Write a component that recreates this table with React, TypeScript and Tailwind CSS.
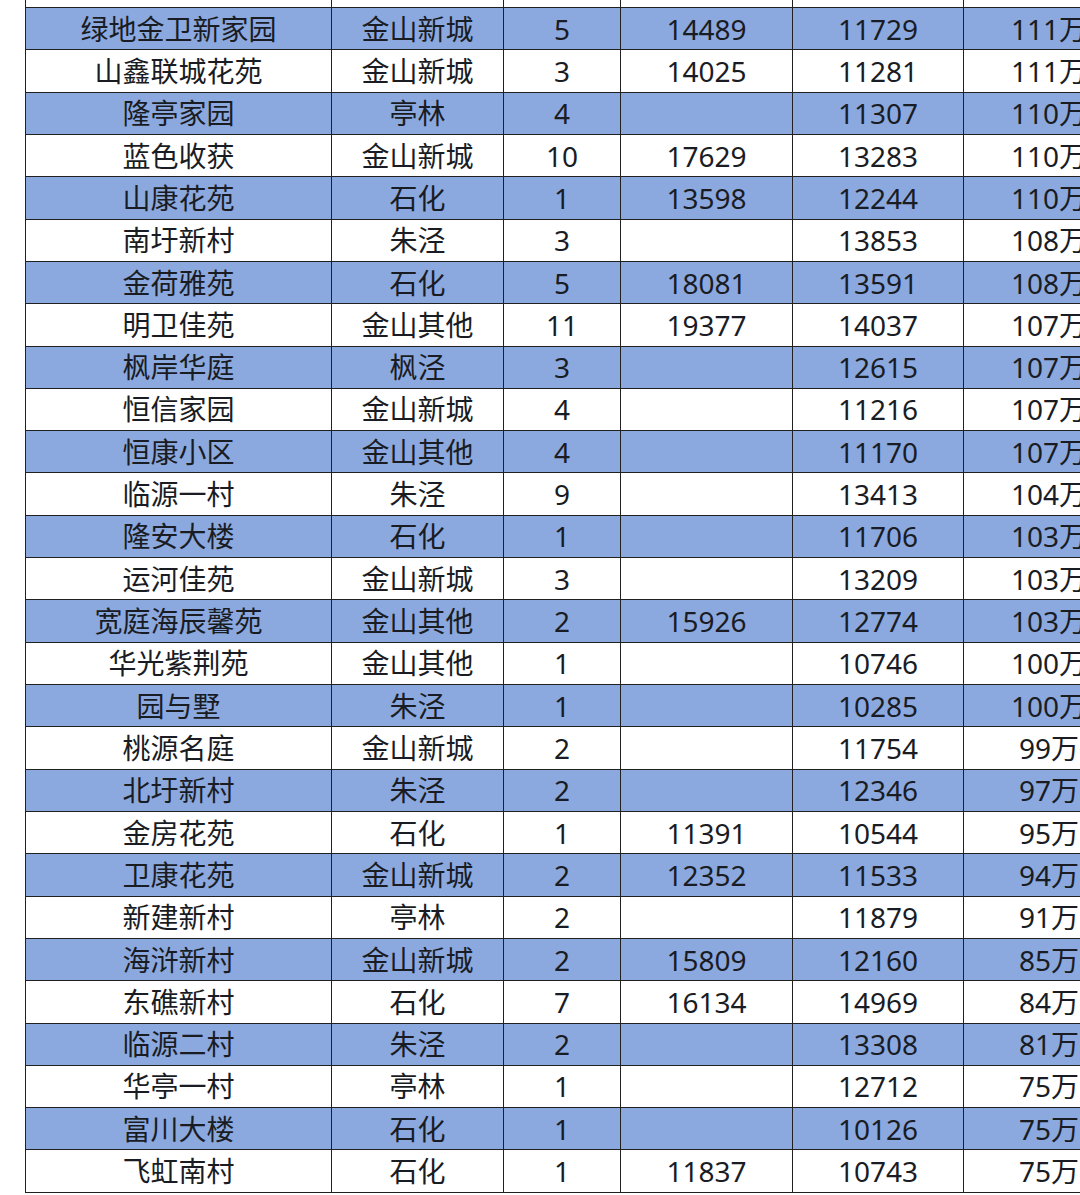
type Row = [string, string, string, string, string, string];

const rows: Row[] = [
  ["绿地金卫新家园", "金山新城", "5", "14489", "11729", "111万"],
  ["山鑫联城花苑", "金山新城", "3", "14025", "11281", "111万"],
  ["隆亭家园", "亭林", "4", "", "11307", "110万"],
  ["蓝色收获", "金山新城", "10", "17629", "13283", "110万"],
  ["山康花苑", "石化", "1", "13598", "12244", "110万"],
  ["南圩新村", "朱泾", "3", "", "13853", "108万"],
  ["金荷雅苑", "石化", "5", "18081", "13591", "108万"],
  ["明卫佳苑", "金山其他", "11", "19377", "14037", "107万"],
  ["枫岸华庭", "枫泾", "3", "", "12615", "107万"],
  ["恒信家园", "金山新城", "4", "", "11216", "107万"],
  ["恒康小区", "金山其他", "4", "", "11170", "107万"],
  ["临源一村", "朱泾", "9", "", "13413", "104万"],
  ["隆安大楼", "石化", "1", "", "11706", "103万"],
  ["运河佳苑", "金山新城", "3", "", "13209", "103万"],
  ["宽庭海辰馨苑", "金山其他", "2", "15926", "12774", "103万"],
  ["华光紫荆苑", "金山其他", "1", "", "10746", "100万"],
  ["园与墅", "朱泾", "1", "", "10285", "100万"],
  ["桃源名庭", "金山新城", "2", "", "11754", "99万"],
  ["北圩新村", "朱泾", "2", "", "12346", "97万"],
  ["金房花苑", "石化", "1", "11391", "10544", "95万"],
  ["卫康花苑", "金山新城", "2", "12352", "11533", "94万"],
  ["新建新村", "亭林", "2", "", "11879", "91万"],
  ["海浒新村", "金山新城", "2", "15809", "12160", "85万"],
  ["东礁新村", "石化", "7", "16134", "14969", "84万"],
  ["临源二村", "朱泾", "2", "", "13308", "81万"],
  ["华亭一村", "亭林", "1", "", "12712", "75万"],
  ["富川大楼", "石化", "1", "", "10126", "75万"],
  ["飞虹南村", "石化", "1", "11837", "10743", "75万"],
];

// column widths measured off the sheet; last column runs past the page edge
const widths = ["w-[306px]", "w-[172px]", "w-[117px]", "w-[172px]", "w-[171px]", "w-[171px]"];

function Cells({ values }: { values: string[] }) {
  return (
    <>
      {values.map((v, i) => (
        <div
          key={i}
          className={`${widths[i]} flex shrink-0 items-center justify-center whitespace-nowrap border-r border-[#202020]`}
        >
          {v}
        </div>
      ))}
    </>
  );
}

export default function App() {
  return (
    <div
      className="h-[1195px] w-[1080px] overflow-hidden bg-white text-[28px] leading-none text-[#1a1c24]"
      style={{ fontFamily: '"Noto Sans", "Noto Sans CJK SC", sans-serif' }}
    >
      <div className="ml-[25px] w-[1110px] border-l border-[#202020]">
        {/* tail of the row above, cut off by the screenshot */}
        <div className="flex h-[8px] border-b border-[#202020] bg-white">
          <Cells values={["", "", "", "", "", ""]} />
        </div>
        {rows.map((row, idx) => (
          <div
            key={idx}
            className={`flex h-[42.32px] border-b border-[#202020] ${
              idx % 2 === 0 ? "bg-[#8ba9de]" : "bg-white"
            }`}
          >
            <Cells values={row} />
          </div>
        ))}
      </div>
    </div>
  );
}
